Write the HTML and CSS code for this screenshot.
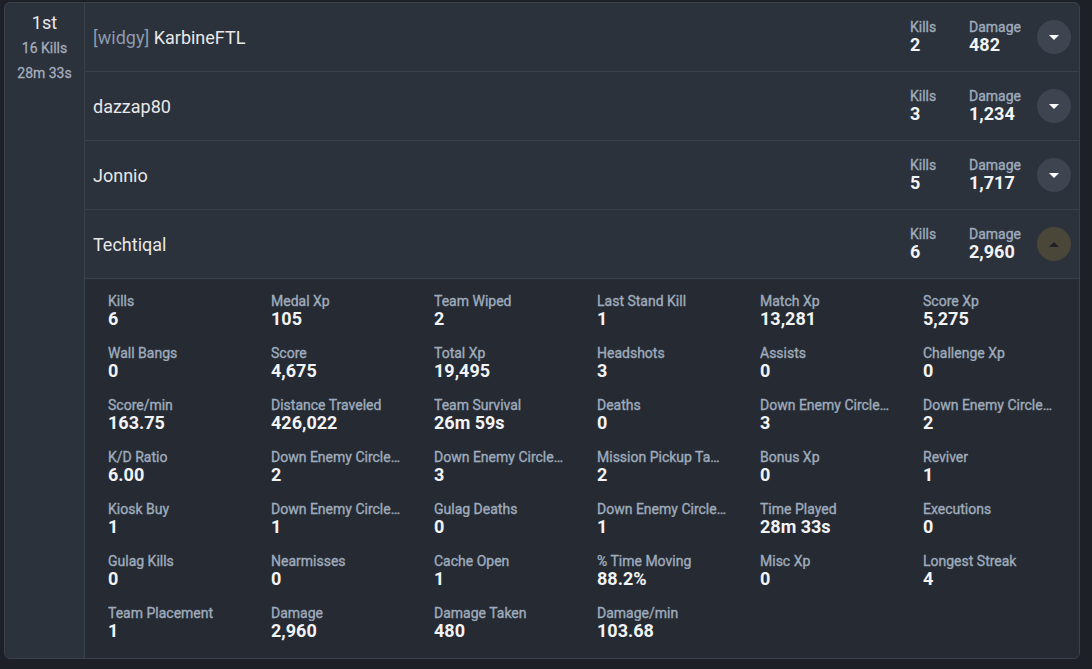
FILE: index.html
```html
<!DOCTYPE html>
<html lang="en">
<head>
    <meta charset="UTF-8">
    <title>Match - Team</title>
    <link rel="stylesheet" href="styles.css">
</head>
<body>
    <div class="team-card">
        <div class="placement">
            <div class="place">1st</div>
            <div class="place-sub">16 Kills</div>
            <div class="place-sub">28m 33s</div>
        </div>

        <div class="players">
            <div class="player">
                <div class="player-name"><span class="clan">[widgy]</span> KarbineFTL</div>
                <div class="quick-stat kills"><div class="stat-label">Kills</div><div class="stat-value">2</div></div>
                <div class="quick-stat"><div class="stat-label">Damage</div><div class="stat-value">482</div></div>
                <button class="toggle"><span class="caret down"></span></button>
            </div>

            <div class="player">
                <div class="player-name">dazzap80</div>
                <div class="quick-stat kills"><div class="stat-label">Kills</div><div class="stat-value">3</div></div>
                <div class="quick-stat"><div class="stat-label">Damage</div><div class="stat-value">1,234</div></div>
                <button class="toggle"><span class="caret down"></span></button>
            </div>

            <div class="player">
                <div class="player-name">Jonnio</div>
                <div class="quick-stat kills"><div class="stat-label">Kills</div><div class="stat-value">5</div></div>
                <div class="quick-stat"><div class="stat-label">Damage</div><div class="stat-value">1,717</div></div>
                <button class="toggle"><span class="caret down"></span></button>
            </div>

            <div class="player">
                <div class="player-name">Techtiqal</div>
                <div class="quick-stat kills"><div class="stat-label">Kills</div><div class="stat-value">6</div></div>
                <div class="quick-stat"><div class="stat-label">Damage</div><div class="stat-value">2,960</div></div>
                <button class="toggle active"><span class="caret up"></span></button>
            </div>

            <div class="details">
                <div class="detail"><div class="stat-label">Kills</div><div class="stat-value">6</div></div>
                <div class="detail"><div class="stat-label">Medal Xp</div><div class="stat-value">105</div></div>
                <div class="detail"><div class="stat-label">Team Wiped</div><div class="stat-value">2</div></div>
                <div class="detail"><div class="stat-label">Last Stand Kill</div><div class="stat-value">1</div></div>
                <div class="detail"><div class="stat-label">Match Xp</div><div class="stat-value">13,281</div></div>
                <div class="detail"><div class="stat-label">Score Xp</div><div class="stat-value">5,275</div></div>

                <div class="detail"><div class="stat-label">Wall Bangs</div><div class="stat-value">0</div></div>
                <div class="detail"><div class="stat-label">Score</div><div class="stat-value">4,675</div></div>
                <div class="detail"><div class="stat-label">Total Xp</div><div class="stat-value">19,495</div></div>
                <div class="detail"><div class="stat-label">Headshots</div><div class="stat-value">3</div></div>
                <div class="detail"><div class="stat-label">Assists</div><div class="stat-value">0</div></div>
                <div class="detail"><div class="stat-label">Challenge Xp</div><div class="stat-value">0</div></div>

                <div class="detail"><div class="stat-label">Score/min</div><div class="stat-value">163.75</div></div>
                <div class="detail"><div class="stat-label">Distance Traveled</div><div class="stat-value">426,022</div></div>
                <div class="detail"><div class="stat-label">Team Survival</div><div class="stat-value">26m 59s</div></div>
                <div class="detail"><div class="stat-label">Deaths</div><div class="stat-value">0</div></div>
                <div class="detail"><div class="stat-label">Down Enemy Circle 1</div><div class="stat-value">3</div></div>
                <div class="detail"><div class="stat-label">Down Enemy Circle 2</div><div class="stat-value">2</div></div>

                <div class="detail"><div class="stat-label">K/D Ratio</div><div class="stat-value">6.00</div></div>
                <div class="detail"><div class="stat-label">Down Enemy Circle 3</div><div class="stat-value">2</div></div>
                <div class="detail"><div class="stat-label">Down Enemy Circle 4</div><div class="stat-value">3</div></div>
                <div class="detail"><div class="stat-label">Mission Pickup Tablet</div><div class="stat-value">2</div></div>
                <div class="detail"><div class="stat-label">Bonus Xp</div><div class="stat-value">0</div></div>
                <div class="detail"><div class="stat-label">Reviver</div><div class="stat-value">1</div></div>

                <div class="detail"><div class="stat-label">Kiosk Buy</div><div class="stat-value">1</div></div>
                <div class="detail"><div class="stat-label">Down Enemy Circle 5</div><div class="stat-value">1</div></div>
                <div class="detail"><div class="stat-label">Gulag Deaths</div><div class="stat-value">0</div></div>
                <div class="detail"><div class="stat-label">Down Enemy Circle 6</div><div class="stat-value">1</div></div>
                <div class="detail"><div class="stat-label">Time Played</div><div class="stat-value">28m 33s</div></div>
                <div class="detail"><div class="stat-label">Executions</div><div class="stat-value">0</div></div>

                <div class="detail"><div class="stat-label">Gulag Kills</div><div class="stat-value">0</div></div>
                <div class="detail"><div class="stat-label">Nearmisses</div><div class="stat-value">0</div></div>
                <div class="detail"><div class="stat-label">Cache Open</div><div class="stat-value">1</div></div>
                <div class="detail"><div class="stat-label">% Time Moving</div><div class="stat-value">88.2%</div></div>
                <div class="detail"><div class="stat-label">Misc Xp</div><div class="stat-value">0</div></div>
                <div class="detail"><div class="stat-label">Longest Streak</div><div class="stat-value">4</div></div>

                <div class="detail"><div class="stat-label">Team Placement</div><div class="stat-value">1</div></div>
                <div class="detail"><div class="stat-label">Damage</div><div class="stat-value">2,960</div></div>
                <div class="detail"><div class="stat-label">Damage Taken</div><div class="stat-value">480</div></div>
                <div class="detail"><div class="stat-label">Damage/min</div><div class="stat-value">103.68</div></div>
            </div>
        </div>
    </div>
</body>
</html>
```

FILE: styles.css
```css
* {
    margin: 0;
    padding: 0;
    box-sizing: border-box;
}

body {
    font-family: Roboto, 'Liberation Sans', sans-serif;
    background: #1d2027;
    padding: 2px 12px 0 4px;
    color: #e6e8eb;
}

.team-card {
    display: flex;
    background: #2c323b;
    border: 1px solid #3a414b;
    border-radius: 6px;
    overflow: hidden;
}

.placement {
    width: 80px;
    flex-shrink: 0;
    border-right: 1px solid #3a414b;
    text-align: center;
    padding-top: 9px;
}

.place {
    font-size: 18px;
    line-height: 22px;
    color: #e6e8eb;
    margin-bottom: 2px;
}

.place-sub {
    font-size: 14px;
    line-height: 25px;
    color: #a3adbb;
    -webkit-text-stroke: 0.3px #a3adbb;
}

.players {
    flex: 1;
    min-width: 0;
}

.player {
    display: flex;
    align-items: center;
    height: 69px;
    padding: 0 8px 0 8px;
    border-bottom: 1px solid #3a414b;
}

.player-name {
    flex: 1;
    font-size: 18px;
    color: #e8e8e8;
}

.clan {
    color: #8d9aae;
}

.quick-stat {
    width: 68px;
}

.quick-stat.kills {
    width: 59px;
}

.stat-label {
    font-size: 14px;
    line-height: 16px;
    color: #9fabbd;
    -webkit-text-stroke: 0.35px #9fabbd;
    white-space: nowrap;
    overflow: hidden;
    text-overflow: ellipsis;
}

.stat-value {
    font-size: 18px;
    line-height: 20px;
    font-weight: 700;
    color: #f2f3f5;
}

.toggle {
    width: 34px;
    height: 34px;
    border: none;
    border-radius: 50%;
    background: #3e4550;
    display: flex;
    align-items: center;
    justify-content: center;
    cursor: pointer;
}

.toggle.active {
    background: #4a4638;
}

.caret {
    width: 0;
    height: 0;
    border-left: 5px solid transparent;
    border-right: 5px solid transparent;
}

.caret.down {
    border-top: 5px solid #ffffff;
}

.caret.up {
    border-bottom: 5px solid #1e2127;
}

.details {
    display: grid;
    grid-template-columns: repeat(6, 163px);
    row-gap: 16px;
    background: #262b33;
    padding: 14px 0 17px 23px;
}

.detail {
    padding-right: 33px;
    min-width: 0;
}
```
